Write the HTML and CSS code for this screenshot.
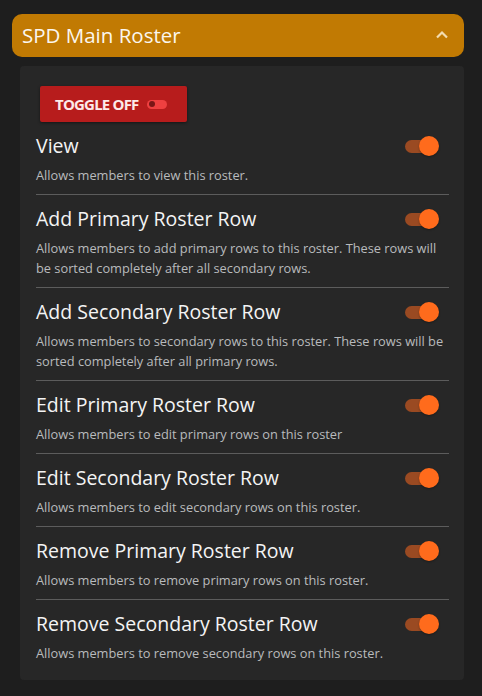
FILE: index.html
```html
<!DOCTYPE html>
<html>
<head>
<meta charset="utf-8">
<link rel="stylesheet" href="styles.css">
</head>
<body>
<div class="wrap">
  <div class="header">
    <span class="header-title">SPD Main Roster</span>
    <svg class="chev" width="14" height="9" viewBox="0 0 14 9"><path d="M2 7.5 L7 2.5 L12 7.5" fill="none" stroke="#f3dcb0" stroke-width="2.2"/></svg>
  </div>
  <div class="panel">
    <button class="toggle-btn"><span>TOGGLE OFF</span><span class="mini-switch"><span class="mini-knob"></span></span></button>
    <div class="row">
      <div class="row-head"><span class="title">View</span><span class="switch"><span class="knob"></span></span></div>
      <div class="desc">Allows members to view this roster.</div>
    </div>
    <div class="row">
      <div class="row-head"><span class="title">Add Primary Roster Row</span><span class="switch"><span class="knob"></span></span></div>
      <div class="desc">Allows members to add primary rows to this roster. These rows will be sorted completely after all secondary rows.</div>
    </div>
    <div class="row">
      <div class="row-head"><span class="title">Add Secondary Roster Row</span><span class="switch"><span class="knob"></span></span></div>
      <div class="desc">Allows members to secondary rows to this roster. These rows will be sorted completely after all primary rows.</div>
    </div>
    <div class="row">
      <div class="row-head"><span class="title">Edit Primary Roster Row</span><span class="switch"><span class="knob"></span></span></div>
      <div class="desc">Allows members to edit primary rows on this roster</div>
    </div>
    <div class="row">
      <div class="row-head"><span class="title">Edit Secondary Roster Row</span><span class="switch"><span class="knob"></span></span></div>
      <div class="desc">Allows members to edit secondary rows on this roster.</div>
    </div>
    <div class="row">
      <div class="row-head"><span class="title">Remove Primary Roster Row</span><span class="switch"><span class="knob"></span></span></div>
      <div class="desc">Allows members to remove primary rows on this roster.</div>
    </div>
    <div class="row last">
      <div class="row-head"><span class="title">Remove Secondary Roster Row</span><span class="switch"><span class="knob"></span></span></div>
      <div class="desc">Allows members to remove secondary rows on this roster.</div>
    </div>
  </div>
</div>
</body>
</html>
```
FILE: styles.css
```css
html, body {
  margin: 0;
  padding: 0;
  background: #1e1e1e;
  font-family: "Open Sans", "Noto Sans", sans-serif;
}
.wrap {
  padding: 14px 18px 0 12px;
}
.header {
  height: 43px;
  background: #c17a03;
  border-radius: 10px;
  display: flex;
  align-items: center;
  justify-content: space-between;
  padding: 0 15px 0 10px;
}
.header-title {
  color: #fbf6ee;
  font-size: 20.5px;
  line-height: 27px;
}
.chev {
  display: block;
  margin-top: -2px;
}
.panel {
  margin: 9px 0 0 8px;
  background: #272727;
  border-radius: 4px;
  padding: 20px 15px 8px 16px;
}
.toggle-btn {
  display: flex;
  align-items: center;
  gap: 8px;
  height: 36px;
  width: 147px;
  margin-left: 4px;
  padding: 0 0 0 15px;
  border: none;
  border-radius: 2px;
  background: #b71c1c;
  color: #fdeaea;
  font-family: "Open Sans", sans-serif;
  font-weight: 700;
  font-size: 15px;
  letter-spacing: -0.8px;
  box-shadow: 0 1px 3px rgba(0,0,0,0.45);
}
.mini-switch {
  width: 20px;
  height: 9px;
  border-radius: 5px;
  background: #ef4040;
  display: flex;
  align-items: center;
  padding-left: 2px;
  box-sizing: border-box;
}
.mini-knob {
  width: 6px;
  height: 6px;
  border-radius: 50%;
  background: #7a1616;
}
.row {
  padding: 10px 0 9px 0;
  border-bottom: 1px solid #5c5c5c;
}
.row.last {
  border-bottom: none;
}
.row-head {
  display: flex;
  align-items: center;
  justify-content: space-between;
  height: 27px;
}
.title {
  color: #f4f4f4;
  font-size: 19.5px;
  line-height: 27px;
}
.switch {
  position: relative;
  width: 34px;
  height: 13px;
  margin-right: 10px;
  margin-top: 1px;
}
.switch::before {
  content: "";
  position: absolute;
  left: 0;
  top: 0;
  width: 28px;
  height: 13px;
  border-radius: 7px;
  background: #9a4a22;
}
.knob {
  position: absolute;
  right: 0;
  top: -4px;
  width: 20px;
  height: 20px;
  border-radius: 50%;
  background: #ff6b1c;
  box-shadow: 0 1px 2px rgba(0,0,0,0.3);
}
.desc {
  margin-top: 6px;
  color: #b9bbbd;
  font-size: 12.8px;
  line-height: 20px;
  padding-right: 2px;
}
```
